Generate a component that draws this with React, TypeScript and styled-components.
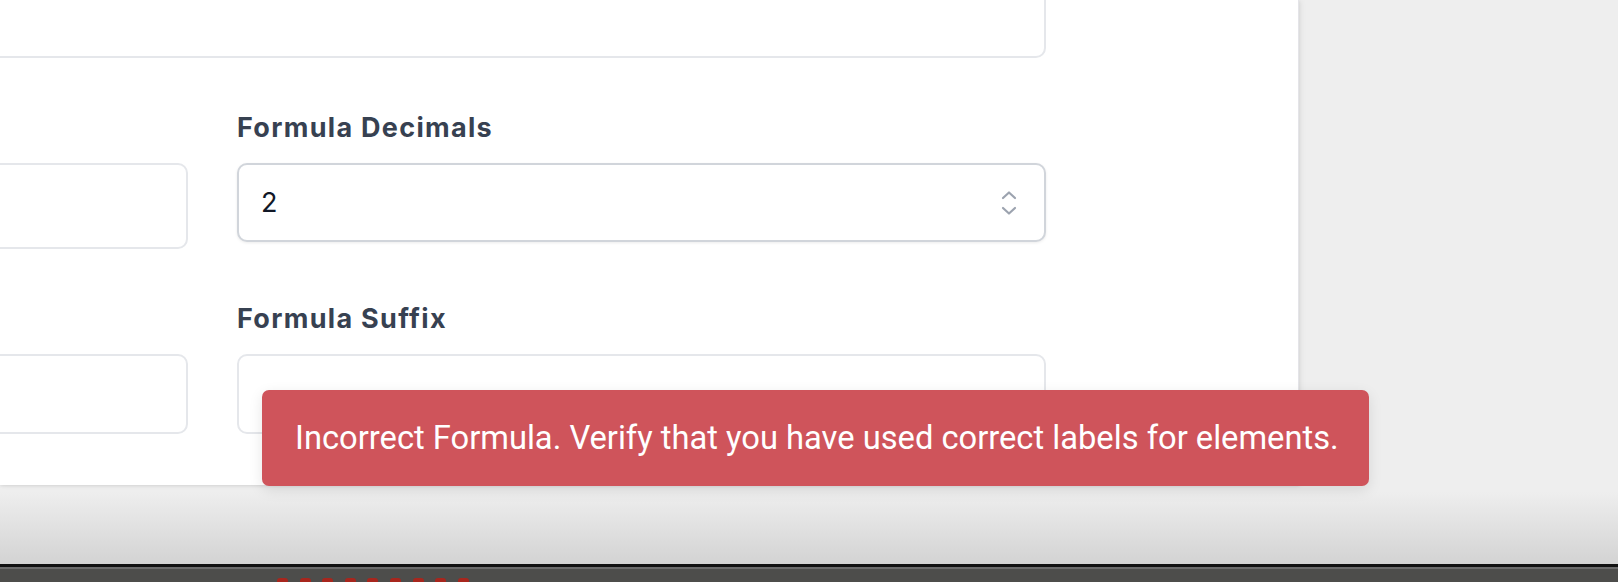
import React from "react";
import styled, { createGlobalStyle } from "styled-components";

const Global = createGlobalStyle`
  html, body { margin: 0; padding: 0; }
  body {
    width: 1618px;
    height: 582px;
    overflow: hidden;
    background: #eeeeee;
    font-family: Inter, "Noto Sans", sans-serif;
  }
`;

const Screen = styled.div`
  position: relative;
  display: flex;
  flex-direction: column;
  width: 1618px;
  height: 582px;
  overflow: hidden;
`;

const Stage = styled.div`
  height: 564px;
  flex: none;
  background: linear-gradient(to bottom, #eeeeee 0, #eeeeee 492px, #d3d3d3 564px);
`;

const Panel = styled.div`
  width: 1299px;
  height: 485px;
  background: #ffffff;
  overflow: hidden;
  box-shadow: 2px 0 6px rgba(0, 0, 0, 0.06), 0 1px 3px rgba(0, 0, 0, 0.08);
  border-right: 1px solid #e4e4e8;
  box-sizing: border-box;
`;

const Form = styled.div`
  display: grid;
  grid-template-columns: 809px 809px;
  column-gap: 49px;
  row-gap: 54px;
  margin-left: -621px;
  margin-top: -22px;
  align-items: start;
`;

const Field = styled.div<{ $span?: boolean }>`
  display: flex;
  flex-direction: column;
  gap: 19px;
  grid-column: ${(p) => (p.$span ? "1 / span 2" : "auto")};
`;

const Label = styled.label`
  display: block;
  min-height: 32px;
  font-family: Inter, "Noto Sans", sans-serif;
  font-weight: 700;
  font-size: 27px;
  line-height: 32px;
  letter-spacing: 1.3px;
  color: #374151;
`;

const Input = styled.div<{ $h: number }>`
  box-sizing: border-box;
  height: ${(p) => p.$h}px;
  border: 2px solid #e5e7eb;
  border-radius: 10px;
  background: #ffffff;
`;

const NumberInput = styled.div`
  box-sizing: border-box;
  height: 79px;
  display: flex;
  align-items: center;
  justify-content: space-between;
  padding: 0 26px 0 22px;
  border: 2px solid #d1d5db;
  border-radius: 10px;
  background: #ffffff;
  box-shadow: 0 1px 3px rgba(0, 0, 0, 0.08);
`;

const Value = styled.span`
  font-family: Inter, "Noto Sans", sans-serif;
  font-size: 27px;
  color: #111827;
`;

const Stepper = styled.svg`
  width: 18px;
  height: 26px;
  display: block;
`;

const Toast = styled.div`
  position: absolute;
  left: 262px;
  top: 390px;
  width: 1107px;
  height: 96px;
  box-sizing: border-box;
  display: flex;
  align-items: center;
  padding: 0 33px;
  background: #cf545b;
  border-radius: 7px;
  box-shadow: 0 4px 14px rgba(0, 0, 0, 0.1);
  color: #ffffff;
  font-family: Roboto, "Liberation Sans", sans-serif;
  font-size: 32.7px;
  white-space: nowrap;
`;

const Rule = styled.div<{ $c: string; $h: number }>`
  height: ${(p) => p.$h}px;
  background: ${(p) => p.$c};
  flex: none;
`;

const Dock = styled.div`
  flex: 1;
  background: #4d4d4b;
  display: flex;
  gap: 11.6px;
  padding: 9px 0 0 277px;
  overflow: hidden;
`;

const Dot = styled.span`
  width: 11px;
  height: 11px;
  border-radius: 3px;
  background: #a8261d;
  flex: none;
`;

export default function App() {
  return (
    <>
      <Global />
      <Screen>
        <Stage>
          <Panel>
            <Form>
              <Field $span>
                <Input $h={80} />
              </Field>
              <Field>
                <Label aria-hidden="true" />
                <Input $h={86} />
              </Field>
              <Field>
                <Label>Formula Decimals</Label>
                <NumberInput>
                  <Value>2</Value>
                  <Stepper viewBox="0 0 18 26" fill="none" stroke="#9ca3af" strokeWidth={2.2} strokeLinecap="round" strokeLinejoin="round">
                    <polyline points="3,8 9,2.5 15,8" />
                    <polyline points="3,18 9,23.5 15,18" />
                  </Stepper>
                </NumberInput>
              </Field>
              <Field>
                <Label aria-hidden="true" />
                <Input $h={80} />
              </Field>
              <Field>
                <Label>Formula Suffix</Label>
                <Input $h={80} />
              </Field>
            </Form>
          </Panel>
        </Stage>
        <Rule $c="#111111" $h={3} />
        <Rule $c="#6b6b6b" $h={2} />
        <Dock>
          {Array.from({ length: 9 }).map((_, i) => (
            <Dot key={i} />
          ))}
        </Dock>
        <Toast>Incorrect Formula. Verify that you have used correct labels for elements.</Toast>
      </Screen>
    </>
  );
}
